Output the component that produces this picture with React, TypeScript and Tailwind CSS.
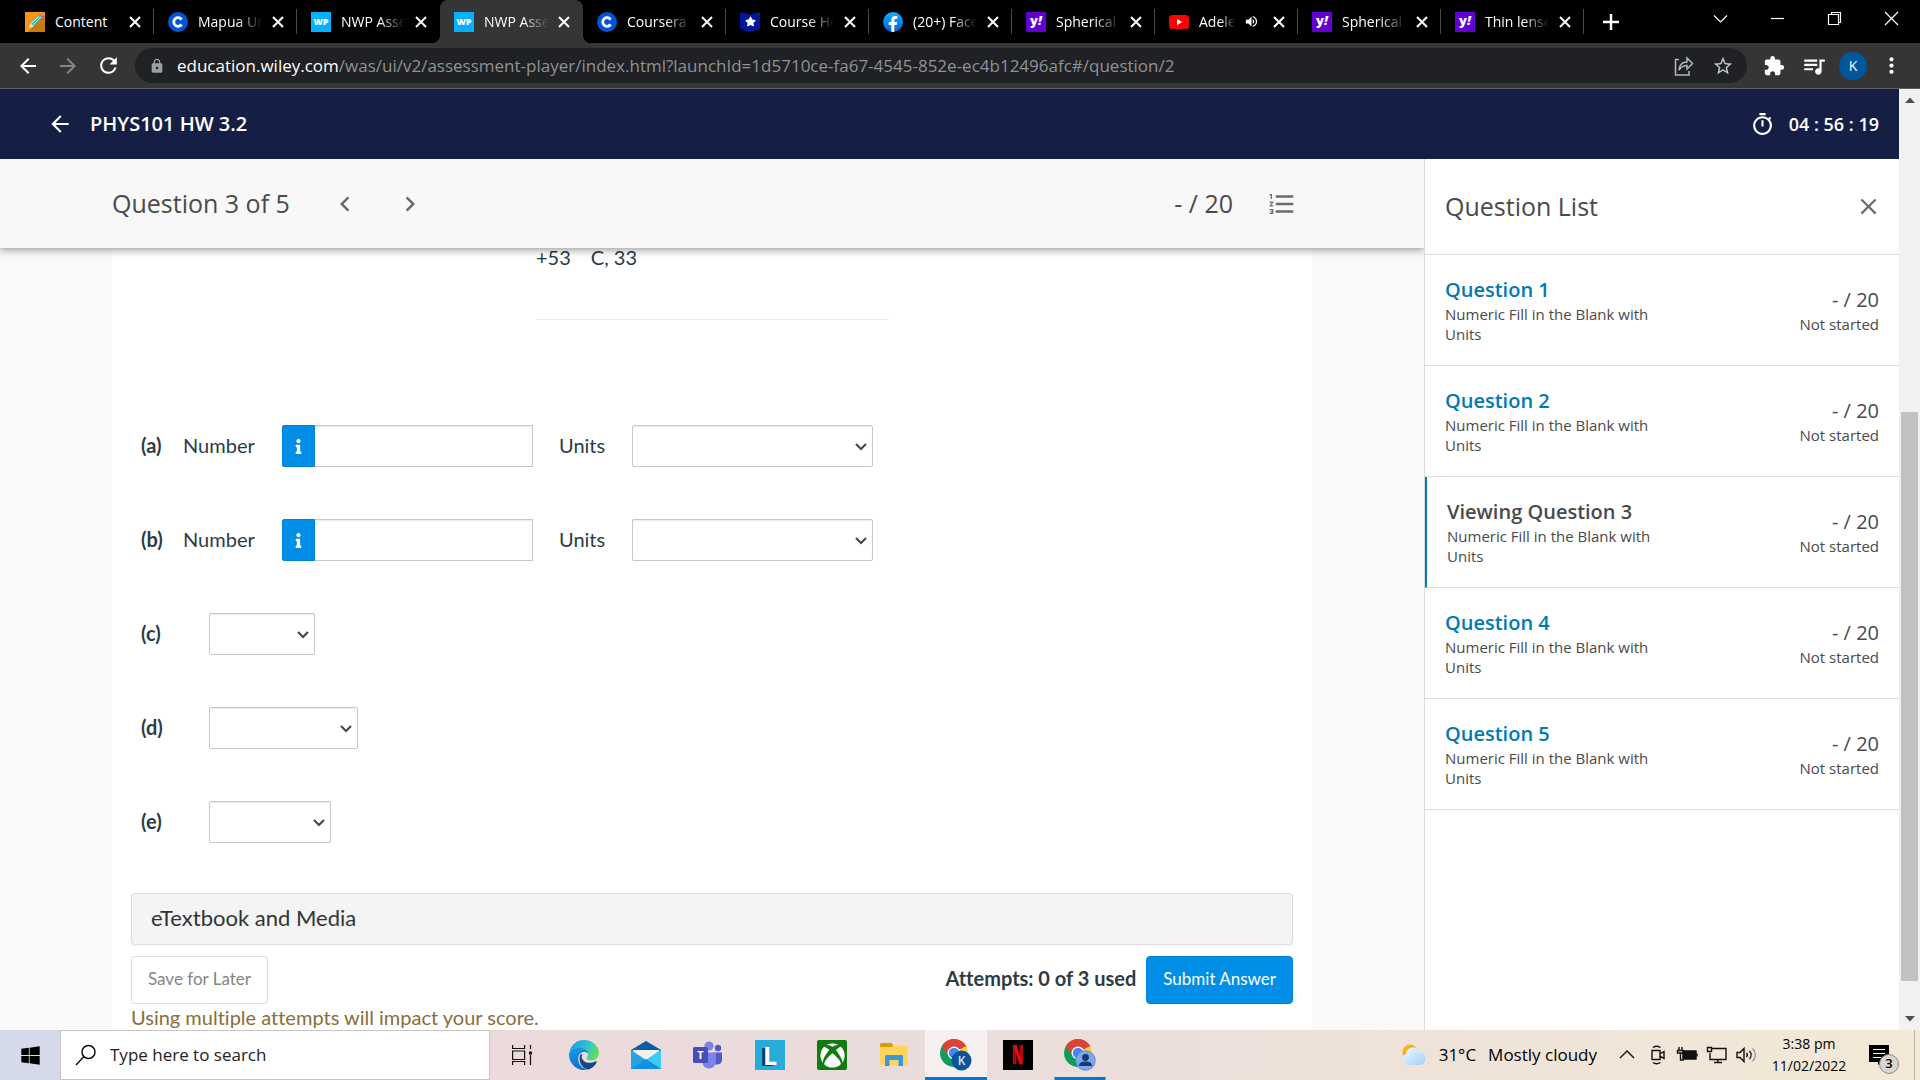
import type { ReactNode } from "react";
import clsx from "clsx";
import { FaFacebookF, FaInfo, FaStar, FaWindows, FaXbox } from "react-icons/fa";
import {
  MdArrowBack,
  MdArrowForward,
  MdChevronLeft,
  MdChevronRight,
  MdClose,
  MdExtension,
  MdFormatListNumbered,
  MdLock,
  MdMoreVert,
  MdOutlineTimer,
  MdQueueMusic,
  MdRefresh,
  MdStarBorder,
  MdVolumeUp,
} from "react-icons/md";

/* ---------- favicons ---------- */

const PencilIcon = (
  <svg width="20" height="20" viewBox="0 0 20 20" aria-hidden>
    <rect width="20" height="20" fill="#f7941d" />
    <path d="M20 3v17H3l3-3L17 5z" fill="#c97a08" />
    <path d="M4 16l1.200-4.600L14 3l3 2.800-8.600 8.800z" fill="#2fc4b2" />
    <path d="M5.600 12L14 4.200M7.200 13.800L16 5" stroke="#d5fff5" strokeWidth="0.900" />
    <path d="M14 3l1-1 3 2.800-1 1z" fill="#b05fc4" />
    <path d="M4 16l1.200-4.600 3.200 3.200z" fill="#fff0c8" />
  </svg>
);

const CourseraIcon = (
  <svg width="20" height="20" viewBox="0 0 20 20" aria-hidden>
    <circle cx="10" cy="10" r="10" fill="#0056d2" />
    <path d="M13.600 12.400A4.300 4.300 0 1 1 13.600 7.600" fill="none" stroke="#fff" strokeWidth="2.800" />
  </svg>
);

const WileyIcon = (
  <span className="flex h-5 w-5 items-center justify-center bg-[#05b1fc] font-['Open_Sans',sans-serif] text-[9px] font-extrabold text-white">
    WP
  </span>
);

const CourseHeroIcon = (
  <span className="relative flex h-5 w-5 items-center justify-center">
    <svg className="absolute inset-0" width="20" height="20" viewBox="0 0 20 20" aria-hidden>
      <path d="M0 0l10 2.500L20 0v17l-10 3-10-3z" fill="#00179a" />
    </svg>
    <FaStar className="relative text-white" size={11} />
  </span>
);

const FacebookIcon = (
  <span className="flex h-5 w-5 items-end justify-center overflow-hidden rounded-full bg-linear-to-b from-[#18acfe] to-[#0163e0]">
    <FaFacebookF className="text-white" size={16} />
  </span>
);

const YahooIcon = (
  <span className="flex h-5 w-5 items-center justify-center bg-[#6001d2] pb-[2px] font-['Open_Sans',sans-serif] text-[13px] leading-none font-extrabold text-white">
    y<i>!</i>
  </span>
);

const YoutubeIcon = (
  <svg width="20" height="20" viewBox="0 0 20 20" aria-hidden>
    <rect y="3" width="20" height="14" rx="3.500" fill="#f00" />
    <path d="M8 7l5.200 3L8 13z" fill="#fff" />
  </svg>
);

type Tab = { title: string; icon: ReactNode; active?: boolean; audio?: boolean };

const tabs: Tab[] = [
  { title: "Content", icon: PencilIcon },
  { title: "Mapua Un", icon: CourseraIcon },
  { title: "NWP Asse", icon: WileyIcon },
  { title: "NWP Asse", icon: WileyIcon, active: true },
  { title: "Coursera", icon: CourseraIcon },
  { title: "Course He", icon: CourseHeroIcon },
  { title: "(20+) Face", icon: FacebookIcon },
  { title: "Spherical", icon: YahooIcon },
  { title: "Adele", icon: YoutubeIcon, audio: true },
  { title: "Spherical", icon: YahooIcon },
  { title: "Thin lense", icon: YahooIcon },
];

function TabItem({ tab, divider }: { tab: Tab; divider: boolean }) {
  return (
    <div
      className={clsx(
        "relative flex h-full w-[143px] min-w-0 items-center pl-[14px]",
        tab.active && "rounded-t-lg bg-[#353535]",
      )}
    >
      {tab.active && (
        <>
          <span className="absolute bottom-0 -left-2 h-2 w-2 bg-[radial-gradient(circle_at_0_0,#000_8px,#353535_8px)]" />
          <span className="absolute -right-2 bottom-0 h-2 w-2 bg-[radial-gradient(circle_at_100%_0,#000_8px,#353535_8px)]" />
        </>
      )}
      <span className="shrink-0">{tab.icon}</span>
      <span
        className={clsx(
          "ml-[10px] overflow-hidden text-[14px] whitespace-nowrap text-white",
          tab.title !== "Content" && "mask-[linear-gradient(to_right,#000_60%,transparent)]",
          tab.audio ? "w-9" : "w-16",
        )}
      >
        {tab.title}
      </span>
      {tab.audio && <MdVolumeUp className="mr-[12px] ml-[9px] shrink-0 text-white" size={15} />}
      <button type="button" aria-label="Close tab" className={clsx("shrink-0 text-white", !tab.audio && "ml-2")}>
        <svg width="16" height="16" viewBox="0 0 16 16" stroke="currentColor" strokeWidth="2">
          <path d="M3 3l10 10M13 3L3 13" />
        </svg>
      </button>
      {divider && <span className="absolute top-[9px] right-0 h-[25px] w-px bg-[#4a4a4a]" />}
    </div>
  );
}

function TabStrip() {
  return (
    <div className="flex h-[43px] shrink-0 bg-black pl-[11px]">
      {tabs.map((tab, i) => (
        <TabItem key={i} tab={tab} divider={!tab.active && !tabs[i + 1]?.active} />
      ))}
      <button type="button" aria-label="New tab" className="ml-[18px] text-white">
        <svg width="18" height="18" viewBox="0 0 18 18" stroke="currentColor" strokeWidth="2.400">
          <path d="M9 1v16M1 9h16" />
        </svg>
      </button>
      <div className="ml-auto flex h-[37px] items-center text-white">
        {[
          { name: "Search tabs", d: "M1 4.500l6.500 6.500L14 4.500" },
          { name: "Minimize", d: "M1 7.500h13" },
          { name: "Restore", d: "M1.500 3.500h10v10h-10zM4.500 3.500v-2h9v10h-2" },
          { name: "Close window", d: "M1 1l13 13M14 1L1 14" },
        ].map((c) => (
          <button key={c.name} type="button" aria-label={c.name} className="flex w-[57px] items-center justify-center">
            <svg width="15" height="15" viewBox="0 0 15 15" fill="none" stroke="currentColor" strokeWidth="1.200">
              <path d={c.d} />
            </svg>
          </button>
        ))}
      </div>
    </div>
  );
}

function Toolbar() {
  return (
    <div className="flex h-[46px] shrink-0 items-center border-b border-[#5f5f5f] bg-[#353535] pr-4 pl-4 text-white">
      <button type="button" aria-label="Back">
        <MdArrowBack size={24} />
      </button>
      <button type="button" aria-label="Forward" className="ml-4 text-[#858585]">
        <MdArrowForward size={24} />
      </button>
      <button type="button" aria-label="Reload" className="ml-4">
        <MdRefresh size={25} />
      </button>
      <div className="ml-[14px] flex h-[35px] min-w-0 flex-1 items-center rounded-full bg-[#202124] pr-[13px] pl-[14px]">
        <MdLock className="shrink-0 text-[#9aa0a6]" size={16} />
        <p className="ml-3 min-w-0 flex-1 truncate text-[17px] text-[#8f9296]">
          <span className="text-white">education.wiley.com</span>
          /was/ui/v2/assessment-player/index.html?launchId=1d5710ce-fa67-4545-852e-ec4b12496afc#/question/2
        </p>
        <button type="button" aria-label="Share" className="mr-[18px] text-[#b4b7bb]">
          <svg width="20" height="22" viewBox="0 0 20 22" fill="none" stroke="currentColor" strokeWidth="1.500">
            <path d="M5 4.500H1.500V20H15v-4" />
            <path d="M5 15c.5-5 3-8 8-8V3l5.500 5.500L13 14v-3.500c-4 0-6 1.500-8 4.500z" />
          </svg>
        </button>
        <button type="button" aria-label="Bookmark" className="text-[#c4c7ca]">
          <MdStarBorder size={22} />
        </button>
      </div>
      <button type="button" aria-label="Extensions" className="ml-4">
        <MdExtension size={22} />
      </button>
      <button type="button" aria-label="Media" className="ml-4">
        <MdQueueMusic size={26} />
      </button>
      <button
        type="button"
        className="ml-3 flex h-7 w-7 items-center justify-center rounded-full bg-[#01579b] text-[14px]"
      >
        K
      </button>
      <button type="button" aria-label="Menu" className="ml-3">
        <MdMoreVert size={25} />
      </button>
    </div>
  );
}

/* ---------- course page ---------- */

function UnitSelect({ label, className }: { label: string; className: string }) {
  return (
    <span className={clsx("relative inline-flex", className)}>
      <select
        aria-label={label}
        className="h-[42px] w-full appearance-none rounded-xs border border-[#c7c7c7] bg-white shadow-[inset_0_1px_1px_rgba(0,0,0,0.08)]"
      >
        <option value="" />
      </select>
      <svg
        className="pointer-events-none absolute top-[18px] right-[6px]"
        width="12"
        height="8"
        viewBox="0 0 12 8"
        fill="none"
        stroke="#484848"
        strokeWidth="2.200"
      >
        <path d="M1 1l5 5 5-5" />
      </svg>
    </span>
  );
}

function NumberRow({ part }: { part: string }) {
  const id = `number-${part}`;
  return (
    <div className="flex items-center">
      <b className="w-[42px] pb-0.5 font-bold">({part})</b>
      <label htmlFor={id} className="w-[99px] pb-0.5">
        Number
      </label>
      <button
        type="button"
        aria-label="Information"
        className="flex h-[42px] w-[33px] items-center justify-center rounded-l-xs border border-[#0082d3] bg-[#008ee6] text-white"
      >
        <FaInfo size={15} />
      </button>
      <input
        id={id}
        type="text"
        className="h-[42px] w-[218px] border border-l-0 border-[#c7c7c7] px-2 shadow-[inset_0_1px_1px_rgba(0,0,0,0.08)]"
      />
      <span className="ml-[26px] w-[73px] pb-0.5">Units</span>
      <UnitSelect label={`Units (${part})`} className="w-[241px]" />
    </div>
  );
}

function ChoiceRow({ part, width }: { part: string; width: string }) {
  return (
    <div className="flex items-center">
      <b className="w-[68px] pb-0.5 font-bold">({part})</b>
      <UnitSelect label={`Answer (${part})`} className={width} />
    </div>
  );
}

function QuestionBody() {
  return (
    <div className="flex-1 overflow-hidden px-28">
      <div className="h-full bg-white px-[19px] font-['Lato',sans-serif] text-[20px] text-[#2d3b45] [font-variant-ligatures:none]">
        <p className="mr-[404px] ml-[405px] flex gap-5 border-b border-[#ececec] pb-[53px] leading-[18px]">
          <span>+53</span>
          <span>C, 33</span>
        </p>
        <form className="mt-[105px] ml-[10px] flex flex-col gap-[52px] leading-7" onSubmit={(e) => e.preventDefault()}>
          <NumberRow part="a" />
          <NumberRow part="b" />
          <ChoiceRow part="c" width="w-[106px]" />
          <ChoiceRow part="d" width="w-[149px]" />
          <ChoiceRow part="e" width="w-[122px]" />
        </form>
        <button
          type="button"
          className="mt-[50px] flex w-full items-center rounded-sm border border-[#dddddd] bg-[#f4f4f4] px-[19px] pt-[10px] pb-3 text-left text-[22px] leading-7 text-[#333333] shadow-xs"
        >
          eTextbook and Media
        </button>
        <div className="mt-[11px] flex items-center">
          <button
            type="button"
            className="h-12 rounded-sm border border-[#dcdcdc] px-4 pb-0.5 text-[17px] text-[#858585]"
          >
            Save for Later
          </button>
          <span className="mr-[10px] ml-auto pb-1 font-bold">Attempts: 0 of 3 used</span>
          <button
            type="button"
            className="h-12 rounded-sm border border-[#0082d3] bg-[#008ee6] px-4 pb-0.5 text-[17px] text-white"
          >
            Submit Answer
          </button>
        </div>
        <p className="leading-[26px] text-[#8a6d3b]">Using multiple attempts will impact your score.</p>
      </div>
    </div>
  );
}

const CURRENT = 3;

function QuestionList() {
  return (
    <aside className="relative z-20 flex w-[475px] shrink-0 flex-col border-l border-[#dcdcdc] bg-white text-[#4a4a4a]">
      <header className="flex h-[96px] shrink-0 items-center justify-between border-b border-[#dcdcdc] pr-[17px] pl-5">
        <h2 className="text-[25px]">Question List</h2>
        <button type="button" aria-label="Close question list" className="text-[#6a6a6a]">
          <MdClose size={27} />
        </button>
      </header>
      <ul>
        {[1, 2, 3, 4, 5].map((n) => (
          <li
            key={n}
            className={clsx(
              "flex items-center justify-between border-b border-[#dcdcdc] py-[21px] pr-5 pl-5",
              n === CURRENT && "border-l-2 border-l-[#007ab5]",
            )}
          >
            <div className="w-[230px] text-[15px] leading-5">
              {n === CURRENT ? (
                <p className="text-[20px] leading-7 font-semibold">Viewing Question {n}</p>
              ) : (
                <a href={`#/question/${n - 1}`} className="block text-[20px] leading-7 font-semibold text-[#007ab5]">
                  Question {n}
                </a>
              )}
              <p>Numeric Fill in the Blank with Units</p>
            </div>
            <div className="pt-1 text-right text-[15px] leading-6">
              <p className="text-[20px]">- / 20</p>
              <p>Not started</p>
            </div>
          </li>
        ))}
      </ul>
    </aside>
  );
}

function Scrollbar() {
  return (
    <div className="flex w-[21px] shrink-0 flex-col items-center justify-between bg-[#f1f1f1] py-2" aria-hidden>
      <svg width="10" height="6" viewBox="0 0 10 6">
        <path d="M0 6l5-5.500L10 6z" fill="#505050" />
      </svg>
      <div className="flex w-full flex-1 flex-col px-[2px] pb-[35px]">
        <span className="flex-[309]" />
        <span className="flex-[569] bg-[#c1c1c1]" />
      </div>
      <svg width="10" height="6" viewBox="0 0 10 6">
        <path d="M0 0l5 5.500L10 0z" fill="#505050" />
      </svg>
    </div>
  );
}

function CoursePage() {
  return (
    <div className="flex min-h-0 flex-1 font-['Open_Sans',sans-serif]">
      <div className="flex min-w-0 flex-1 flex-col">
        <header className="flex h-[70px] shrink-0 items-center bg-[#151f45] px-5 text-[18px] font-semibold text-white">
          <button type="button" aria-label="Back to course" className="ml-[27px]">
            <MdArrowBack size={26} />
          </button>
          <h1 className="ml-[17px] text-[20px]">PHYS101 HW 3.2</h1>
          <MdOutlineTimer className="ml-auto" size={25} />
          <span className="ml-[14px]">04 : 56 : 19</span>
        </header>
        <div className="flex min-h-0 flex-1">
          <main className="flex min-w-0 flex-1 flex-col bg-[#fafafa]">
            <div className="relative z-10 flex h-[89px] shrink-0 items-center bg-[#f8f8f8] pr-[127px] pl-28 text-[25px] text-[#4a4a4a] shadow-[0_2px_8px_rgba(0,0,0,0.4)]">
              <h2>Question 3 of 5</h2>
              <button type="button" aria-label="Previous question" className="ml-10 text-[#6a6a6a]">
                <MdChevronLeft size={30} />
              </button>
              <button type="button" aria-label="Next question" className="ml-[35px] text-[#6a6a6a]">
                <MdChevronRight size={30} />
              </button>
              <span className="ml-auto">- / 20</span>
              <button type="button" aria-label="Toggle question list" className="ml-[34px] text-[#6a6a6a]">
                <MdFormatListNumbered size={30} />
              </button>
            </div>
            <QuestionBody />
          </main>
          <QuestionList />
        </div>
      </div>
      <Scrollbar />
    </div>
  );
}

/* ---------- taskbar ---------- */

const EdgeIcon = (
  <svg width="30" height="30" viewBox="0 0 30 30" aria-hidden>
    <defs>
      <linearGradient id="edgeTop" x1="0" y1="0.300" x2="1" y2="0.700">
        <stop offset="0" stopColor="#1a9fe0" />
        <stop offset="0.500" stopColor="#2bc3d2" />
        <stop offset="1" stopColor="#6fe04d" />
      </linearGradient>
      <linearGradient id="edgeLeft" x1="0" y1="0" x2="0.400" y2="1">
        <stop offset="0" stopColor="#1b9de2" />
        <stop offset="1" stopColor="#0b6fd0" />
      </linearGradient>
    </defs>
    <path d="M.5 12C2 4.500 8 0 15 0c9 0 15 6.500 15 13 0 4.500-3.500 7.500-7.500 7.500-3 0-5-1-5-2.200 0-.8 1.700-1.600 1.700-4C19.200 11 15.500 8 11 8 6 8 2.500 9.500.5 12z" fill="url(#edgeTop)" />
    <path d="M0 15C0 10 5 7.800 10.500 7.800c5 0 8.700 2.700 8.700 6.200-1-1.500-2.500-2-4-2-3.500 0-6 3-6 7 0 5.500 4.500 10 9.500 10.500A15 15 0 0 1 0 15z" fill="url(#edgeLeft)" />
    <path d="M11.500 14.500c-3 6 1 14.500 8 15 4-1.200 7-4 8.200-7.500.3-.8-.4-1-1-.7-7 3.500-13.500.7-14-4.300 0-1 .3-2 1-2.800z" fill="#114a8b" />
  </svg>
);

const MailIcon = (
  <svg width="30" height="28" viewBox="0 0 30 28" aria-hidden>
    <path d="M0 9L15 0l15 9v5H0z" fill="#0a5ba8" />
    <path d="M2 9h26v9H2z" fill="#f4f1ee" />
    <path d="M0 9l15 10L30 9v19H0z" fill="#21a5e6" />
    <path d="M15 19L30 9v19z" fill="#3ccbf4" />
    <path d="M0 28l15-10 15 10z" fill="#1590dc" />
  </svg>
);

const TeamsIcon = (
  <svg width="30" height="28" viewBox="0 0 30 28" aria-hidden>
    <circle cx="25" cy="7" r="3.200" fill="#5059c9" />
    <path d="M20 11.500h9v8a5 5 0 0 1-5 4h-4z" fill="#5059c9" />
    <circle cx="16" cy="5" r="4.600" fill="#7b83eb" />
    <path d="M9 11.500h14v8.500c0 4-3 7.500-7 7.500s-7-3.500-7-7.500z" fill="#7b83eb" />
    <rect y="6" width="15" height="16" rx="1.500" fill="#464eb8" />
    <text x="7.500" y="18" textAnchor="middle" fontSize="11" fontWeight="700" fontFamily="Open Sans" fill="#fff">
      T
    </text>
  </svg>
);

const LenovoIcon = (
  <span className="flex h-[30px] w-[30px] items-center justify-center bg-[#27acd9] font-['Open_Sans',sans-serif] text-[25px] leading-none font-bold text-white [text-shadow:-3px_1px_0_#073a72]">
    L
  </span>
);

const XboxIcon = (
  <span className="flex h-[30px] w-[30px] items-center justify-center rounded-xs bg-[#107c10]">
    <FaXbox className="text-white" size={25} />
  </span>
);

const FolderIcon = (
  <svg width="28" height="24" viewBox="0 0 28 24" aria-hidden>
    <path d="M0 1.500A1.500 1.500 0 0 1 1.500 0h10L13 2v3H0z" fill="#dd9b06" />
    <path d="M0 4h11l3-1.500h12A1.500 1.500 0 0 1 27.500 4v17a1 1 0 0 1-1 1H1a1 1 0 0 1-1-1z" fill="#ffd45a" />
    <path d="M5 13.500A1.500 1.500 0 0 1 6.500 12h15a1.500 1.500 0 0 1 1.500 1.500V23h-4.500v-6h-9v6H5z" fill="#3a96dd" />
  </svg>
);

function ChromeIcon({ badge }: { badge: ReactNode }) {
  return (
    <svg width="32" height="32" viewBox="0 0 32 32" aria-hidden>
      <path d="M14 14L1.900 7A14 14 0 0 1 26.100 7z" fill="#db4437" />
      <path d="M14 14L1.900 7a14 14 0 0 0 12.100 21z" fill="#0f9d58" />
      <path d="M14 14l12.100-7A14 14 0 0 1 14 28z" fill="#ffcd40" />
      <path d="M14 7.500h12.400L26 6.800A14 14 0 0 0 2 6.800l6.400 10.700z" fill="#db4437" />
      <circle cx="14" cy="14" r="6.500" fill="#fff" />
      <circle cx="14" cy="14" r="5.200" fill="#4285f4" />
      {badge}
    </svg>
  );
}

const KBadge = (
  <>
    <circle cx="21.500" cy="21.500" r="10" fill="#0b5499" />
    <text x="21.500" y="26" textAnchor="middle" fontSize="12" fontWeight="600" fontFamily="Open Sans" fill="#cfe3f7">
      K
    </text>
  </>
);

const PersonBadge = (
  <>
    <circle cx="21.500" cy="21.500" r="9.800" fill="#7fa7e8" stroke="#5c82c0" strokeWidth="0.800" />
    <circle cx="21.500" cy="18.500" r="3.400" fill="#123a78" />
    <path d="M15 27c0-3.500 3-4.500 6.500-4.500S28 23.500 28 27z" fill="#123a78" />
  </>
);

const NetflixIcon = (
  <svg width="30" height="30" viewBox="0 0 30 30" aria-hidden>
    <rect width="30" height="30" fill="#000" />
    <path d="M10 5h3.500v19L10 24.500zM16.500 5H20v19.500l-3.500-.5z" fill="#b1060f" />
    <path d="M10 5h3.500L20 24.500l-3.500-.5z" fill="#e50914" />
  </svg>
);

const TaskViewIcon = (
  <svg width="20" height="20" viewBox="0 0 20 20" fill="none" stroke="#111" strokeWidth="1.200" aria-hidden>
    <path d="M.6 0v3.500h12V0M.6 6h12v8.500H.6zM.6 20v-3.500h12V20M18.500 0v4M18.500 10v10" />
    <path d="M17 6.500h3v3h-3z" fill="#111" stroke="none" />
  </svg>
);

const apps: { name: string; icon: ReactNode; bar?: string }[] = [
  { name: "Task View", icon: TaskViewIcon },
  { name: "Microsoft Edge", icon: EdgeIcon },
  { name: "Mail", icon: MailIcon },
  { name: "Microsoft Teams", icon: TeamsIcon },
  { name: "Lenovo Vantage", icon: LenovoIcon },
  { name: "Xbox", icon: XboxIcon },
  { name: "File Explorer", icon: FolderIcon },
  { name: "Google Chrome", icon: <ChromeIcon badge={KBadge} />, bar: "w-full" },
  { name: "Netflix", icon: NetflixIcon },
  { name: "Google Chrome (2)", icon: <ChromeIcon badge={PersonBadge} />, bar: "w-[51px]" },
];

const WeatherIcon = (
  <svg width="26" height="22" viewBox="0 0 26 22" aria-hidden>
    <defs>
      <linearGradient id="cloud" x1="0" y1="0" x2="1" y2="1">
        <stop offset="0" stopColor="#f4fbff" />
        <stop offset="1" stopColor="#9fd0f5" />
      </linearGradient>
    </defs>
    <circle cx="9" cy="8" r="7.500" fill="#fbb117" />
    <path d="M6.500 21a5.500 5.500 0 0 1-1.500-10.800 7.300 7.300 0 0 1 13.800-2.700A6.900 6.900 0 0 1 19 21z" fill="url(#cloud)" />
  </svg>
);

function TrayIcons() {
  return (
    <svg width="142" height="24" viewBox="0 0 142 24" fill="none" stroke="#111" strokeWidth="1.400" aria-hidden>
      <path d="M3 15l7-7 7 7" />
      {/* meet now */}
      <path d="M35 7.500h8v9h-8zM43 11l4-2.500v7L43 13M36 4.500c2-1.500 5-1.500 7.500 0M36 19.500c2 1.500 5 1.500 7.500 0" />
      {/* battery */}
      <path d="M66 8h13v8H66z" fill="#111" />
      <path d="M80 10.500v3M62 4v3M65 4v3M60.500 7.500h6v2.500h-6zM63.500 10v7H67" />
      {/* network */}
      <path d="M95 5.500h14v11H93V10M90.500 4.500h4v4h-4zM101 16.500v3M97 19.500h8" />
      {/* volume */}
      <path d="M120 9.500h3l4-4v13l-4-4h-3zM129.500 10a3 3 0 0 1 0 4M132.500 8a6 6 0 0 1 0 8" />
      <path d="M135.500 5.500a9 9 0 0 1 0 13" stroke="#999" />
    </svg>
  );
}

function Taskbar() {
  return (
    <footer className="flex h-[50px] shrink-0 bg-linear-to-r from-[#ecd6dc] via-[#ebdddc] to-[#f3e9d6] text-black">
      <button type="button" aria-label="Start" className="flex w-[60px] items-center justify-center bg-[#d5daea]">
        <FaWindows size={21} />
      </button>
      <label className="flex w-[430px] items-center border border-[#c6c6c6] bg-white pl-[14px]">
        <svg width="22" height="22" viewBox="0 0 22 22" fill="none" stroke="#111" strokeWidth="1.500" aria-hidden>
          <circle cx="13.500" cy="8" r="6.500" />
          <path d="M9 12.500L1 21" />
        </svg>
        <input
          type="text"
          aria-label="Search"
          placeholder="Type here to search"
          className="ml-[13px] min-w-0 flex-1 text-[17px] outline-none placeholder:text-[#222222]"
        />
      </label>
      <div className="flex pl-px">
        {apps.map((app) => (
          <button
            key={app.name}
            type="button"
            aria-label={app.name}
            className={clsx(
              "relative flex w-[62px] items-center justify-center",
              app.bar === "w-full" && "bg-[#f6f1f0]",
            )}
          >
            {app.icon}
            {app.bar && (
              <span className={clsx("absolute bottom-0 left-1/2 h-[3px] -translate-x-1/2 bg-[#0078d7]", app.bar)} />
            )}
          </button>
        ))}
      </div>
      <div className="ml-auto flex items-center text-[17px]">
        {WeatherIcon}
        <span className="ml-3">31°C</span>
        <span className="mr-5 ml-3">Mostly cloudy</span>
        <TrayIcons />
        <div className="ml-1 w-[92px] text-center text-[14px] leading-[22px]">
          <p>3:38 pm</p>
          <p>11/02/2022</p>
        </div>
        <button
          type="button"
          aria-label="Notifications"
          className="relative mr-[13px] ml-[14px] flex h-full w-[32px] items-start pt-[15px]"
        >
          <svg width="20" height="20" viewBox="0 0 20 20">
            <path d="M0 0h20v17h-7l-4 3v-3H0z" fill="#000" />
            <path d="M4 4.500h12M4 8.500h12M4 12.500h8" stroke="#fff" strokeWidth="1.200" />
          </svg>
          <span className="absolute top-[24px] left-[10px] flex h-[20px] w-[20px] items-center justify-center rounded-full border border-[#8a8a8a] bg-[#d8d6d0] text-[13px] font-semibold">
            3
          </span>
        </button>
        <span className="h-full w-[6px] border-l border-[#b9b2a8]" />
      </div>
    </footer>
  );
}

export default function App() {
  return (
    <div className="flex h-screen flex-col overflow-hidden font-['Open_Sans',sans-serif]">
      <TabStrip />
      <Toolbar />
      <CoursePage />
      <Taskbar />
    </div>
  );
}
